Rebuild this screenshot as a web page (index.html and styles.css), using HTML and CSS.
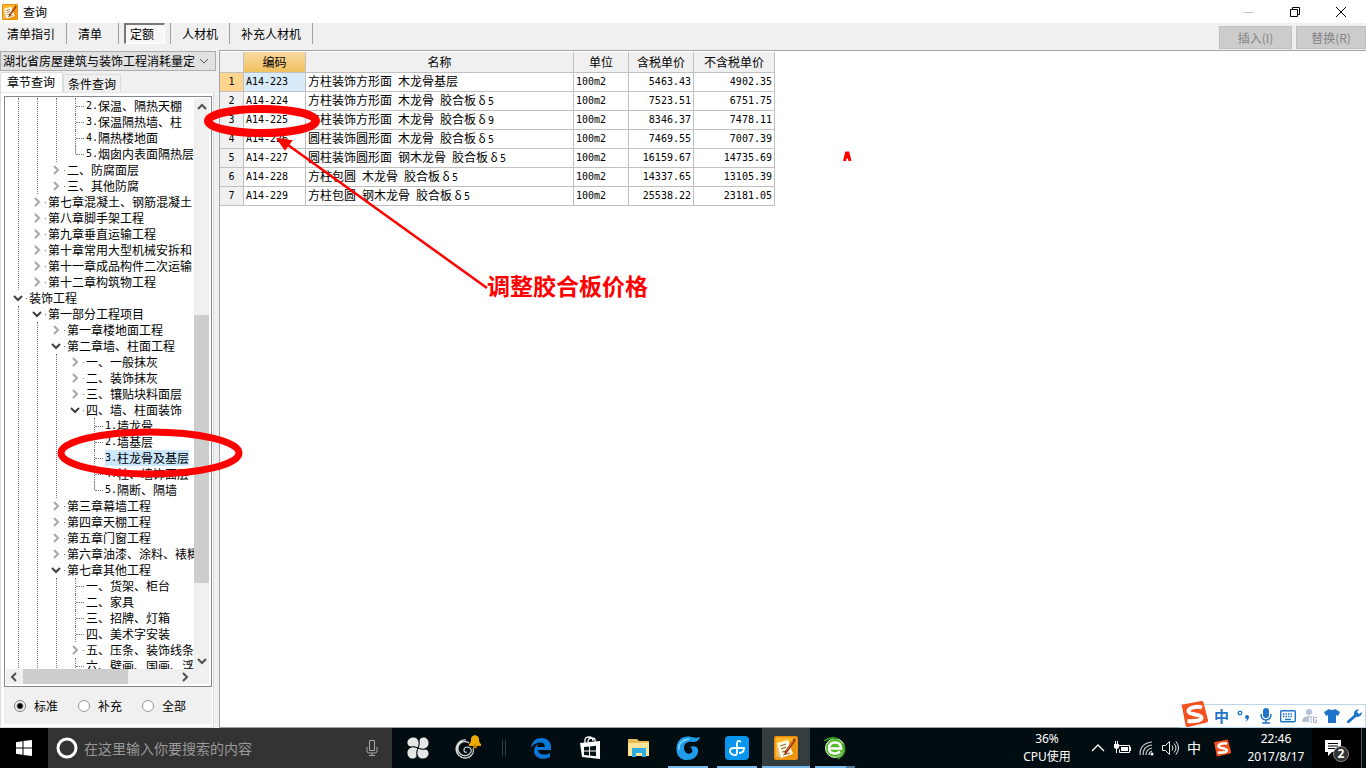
FILE: index.html
```html
<!DOCTYPE html>
<html lang="zh-CN">
<head>
<meta charset="utf-8">
<title>查询</title>
<link rel="stylesheet" href="styles.css">
</head>
<body>
<svg class="defs" width="0" height="0" aria-hidden="true">
  <symbol id="right" viewBox="0 0 14 10"><path d="M3 1l4 4-4 4" fill="none" stroke="#a6a6a6" stroke-width="2"/><path d="M13 5h1v1h-1z" fill="#777"/></symbol>
  <symbol id="down" viewBox="0 0 14 10"><path d="M1 3l4 4 4-4" fill="none" stroke="#404040" stroke-width="2"/><path d="M13 5h1v1h-1z" fill="#777"/></symbol>
  <symbol id="note" viewBox="0 0 24 24">
    <rect width="24" height="24" rx="2" fill="#e98a0c"/><rect x="1.500" y="1.500" width="21" height="21" rx="1" fill="#ffb829"/>
    <path d="M2 22L22 2v20z" fill="#ed920c"/>
    <path d="M3 7l11-3 5 14-12 4z" fill="#fffbe8"/><path d="M3 7l4 15-3-1z" fill="#d9c79a"/>
    <path d="M6 10l6-2M7 13l5-2M8 16l5-1M9 19l7-2" stroke="#8c6b3e" stroke-width="1.200"/>
    <path d="M20 2l2 2-9 13-3 2 1-4z" fill="#9c3213"/><path d="M20 4l-8 11" stroke="#e58a43" stroke-width="1"/>
  </symbol>
  <symbol id="sogou" viewBox="0 0 28 28">
    <path d="M2 6.500Q1 5 3 4.500L21 1q2-.5 2.500 1.500L28 20q.4 2-1.500 2.600L8 27q-2 .3-2.400-1.500z" fill="#f4511e"/>
    <path d="M22 7.500C17 5.500 8 8 8.500 11.500S21 14 21.500 17.500 13 21.500 7.500 21" fill="none" stroke="#fff" stroke-width="4"/>
  </symbol>
</svg>

<header class="titlebar">
  <svg class="app-icon" viewBox="0 0 24 24"><use href="#note"/></svg>
  <h1>查询</h1>
  <div class="window-buttons">
    <button aria-label="最小化"><svg viewBox="0 0 12 12"><path d="M1 6.500h10" stroke="#c4c4c4"/></svg></button>
    <button aria-label="还原"><svg viewBox="0 0 12 12"><path d="M1.500 3.500h7v7h-7zM3.500 3.500v-2h7v7h-2" fill="none" stroke="#000"/></svg></button>
    <button aria-label="关闭"><svg viewBox="0 0 12 12"><path d="M1 1l10 10M11 1L1 11" stroke="#000"/></svg></button>
  </div>
</header>

<nav class="toolbar">
  <div class="modes">
    <button>清单指引</button>
    <button class="roomy">清单</button>
    <button class="pressed"><span>定额</span></button>
    <button>人材机</button>
    <button>补充人材机</button>
  </div>
  <div class="actions">
    <button disabled>插入(I)</button>
    <button disabled>替换(R)</button>
  </div>
</nav>

<main>
  <aside>
    <div class="combo">
      <select aria-label="定额库"><option>湖北省房屋建筑与装饰工程消耗量定</option></select>
      <svg viewBox="0 0 10 10"><path d="M1 3l4 4 4-4" fill="none" stroke="#555"/></svg>
    </div>
    <div class="tabs">
      <button class="active">章节查询</button>
      <button>条件查询</button>
    </div>
    <section class="page">
      <div class="tree-box">
        <div class="tree">
          <ul>
            <li><ul class="kids">
              <li><ul class="kids">
                <li><ul class="kids">
                  <li class="leaf"><b>2.</b>保温、隔热天棚</li>
                  <li class="leaf"><b>3.</b>保温隔热墙、柱</li>
                  <li class="leaf"><b>4.</b>隔热楼地面</li>
                  <li class="leaf end"><b>5.</b>烟囱内表面隔热层</li>
                </ul></li>
                <li><p><svg><use href="#right"/></svg>二、防腐面层</p></li>
                <li><p><svg><use href="#right"/></svg>三、其他防腐</p></li>
              </ul></li>
              <li><p><svg><use href="#right"/></svg>第七章混凝土、钢筋混凝土</p></li>
              <li><p><svg><use href="#right"/></svg>第八章脚手架工程</p></li>
              <li><p><svg><use href="#right"/></svg>第九章垂直运输工程</p></li>
              <li><p><svg><use href="#right"/></svg>第十章常用大型机械安拆和</p></li>
              <li><p><svg><use href="#right"/></svg>第十一章成品构件二次运输</p></li>
              <li><p><svg><use href="#right"/></svg>第十二章构筑物工程</p></li>
            </ul></li>
            <li><p><svg><use href="#down"/></svg>装饰工程</p>
              <ul class="kids">
                <li><p><svg><use href="#down"/></svg>第一部分工程项目</p>
                  <ul class="kids">
                    <li><p><svg><use href="#right"/></svg>第一章楼地面工程</p></li>
                    <li><p><svg><use href="#down"/></svg>第二章墙、柱面工程</p>
                      <ul class="kids">
                        <li><p><svg><use href="#right"/></svg>一、一般抹灰</p></li>
                        <li><p><svg><use href="#right"/></svg>二、装饰抹灰</p></li>
                        <li><p><svg><use href="#right"/></svg>三、镶贴块料面层</p></li>
                        <li><p><svg><use href="#down"/></svg>四、墙、柱面装饰</p>
                          <ul class="kids last">
                            <li class="leaf"><b>1.</b>墙龙骨</li>
                            <li class="leaf"><b>2.</b>墙基层</li>
                            <li class="leaf"><span class="selected"><b>3.</b>柱龙骨及基层</span></li>
                            <li class="leaf"><b>4.</b>柱、墙饰面层</li>
                            <li class="leaf end"><b>5.</b>隔断、隔墙</li>
                          </ul>
                        </li>
                      </ul>
                    </li>
                    <li><p><svg><use href="#right"/></svg>第三章幕墙工程</p></li>
                    <li><p><svg><use href="#right"/></svg>第四章天棚工程</p></li>
                    <li><p><svg><use href="#right"/></svg>第五章门窗工程</p></li>
                    <li><p><svg><use href="#right"/></svg>第六章油漆、涂料、裱糊</p></li>
                    <li><p><svg><use href="#down"/></svg>第七章其他工程</p>
                      <ul class="kids">
                        <li class="leaf">一、货架、柜台</li>
                        <li class="leaf">二、家具</li>
                        <li class="leaf">三、招牌、灯箱</li>
                        <li class="leaf">四、美术字安装</li>
                        <li><p><svg><use href="#right"/></svg>五、压条、装饰线条</p></li>
                        <li class="leaf">六、壁画、国画、浮雕</li>
                      </ul>
                    </li>
                  </ul>
                </li>
              </ul>
            </li>
          </ul>
        </div>
        <div class="vscroll">
          <svg viewBox="0 0 10 10"><path d="M1 7l4-4 4 4" fill="none" stroke="#505050" stroke-width="2"/></svg>
          <i></i>
          <svg viewBox="0 0 10 10"><path d="M1 3l4 4 4-4" fill="none" stroke="#505050" stroke-width="2"/></svg>
        </div>
        <div class="hscroll">
          <svg viewBox="0 0 10 10"><path d="M7 1L3 5l4 4" fill="none" stroke="#505050" stroke-width="2"/></svg>
          <i></i>
          <svg viewBox="0 0 10 10"><path d="M3 1l4 4-4 4" fill="none" stroke="#505050" stroke-width="2"/></svg>
        </div>
      </div>
      <div class="scope">
        <label><input type="radio" name="scope" checked>标准</label>
        <label><input type="radio" name="scope">补充</label>
        <label><input type="radio" name="scope">全部</label>
      </div>
    </section>
  </aside>

  <section class="content">
    <table>
      <colgroup><col class="c-row"><col class="c-code"><col class="c-name"><col class="c-unit"><col class="c-tax"><col class="c-net"></colgroup>
      <thead><tr><th></th><th class="current">编码</th><th>名称</th><th>单位</th><th>含税单价</th><th>不含税单价</th></tr></thead>
      <tbody>
        <tr class="current"><th>1</th><td class="code">A14-223</td><td>方柱装饰方形面<b> </b>木龙骨基层</td><td class="code">100m2</td><td class="num">5463.43</td><td class="num">4902.35</td></tr>
        <tr><th>2</th><td class="code">A14-224</td><td>方柱装饰方形面<b> </b>木龙骨<b> </b>胶合板<em>δ</em><b>5</b></td><td class="code">100m2</td><td class="num">7523.51</td><td class="num">6751.75</td></tr>
        <tr><th>3</th><td class="code">A14-225</td><td>方柱装饰方形面<b> </b>木龙骨<b> </b>胶合板<em>δ</em><b>9</b></td><td class="code">100m2</td><td class="num">8346.37</td><td class="num">7478.11</td></tr>
        <tr><th>4</th><td class="code">A14-226</td><td>圆柱装饰圆形面<b> </b>木龙骨<b> </b>胶合板<em>δ</em><b>5</b></td><td class="code">100m2</td><td class="num">7469.55</td><td class="num">7007.39</td></tr>
        <tr><th>5</th><td class="code">A14-227</td><td>圆柱装饰圆形面<b> </b>钢木龙骨<b> </b>胶合板<em>δ</em><b>5</b></td><td class="code">100m2</td><td class="num">16159.67</td><td class="num">14735.69</td></tr>
        <tr><th>6</th><td class="code">A14-228</td><td>方柱包圆<b> </b>木龙骨<b> </b>胶合板<em>δ</em><b>5</b></td><td class="code">100m2</td><td class="num">14337.65</td><td class="num">13105.39</td></tr>
        <tr><th>7</th><td class="code">A14-229</td><td>方柱包圆<b> </b>钢木龙骨<b> </b>胶合板<em>δ</em><b>5</b></td><td class="code">100m2</td><td class="num">25538.22</td><td class="num">23181.05</td></tr>
      </tbody>
    </table>
  </section>
</main>

<footer class="taskbar">
  <button class="start" aria-label="开始"><svg viewBox="0 0 16 16"><path d="M0 2.200L6.500 1.300V7.500H0zM7.500 1.100L16 0v7.500H7.500zM0 8.500h6.500v6.200L0 13.800zM7.500 8.500H16V16l-8.500-1.100z" fill="#fff"/></svg></button>
  <div class="search">
    <svg class="cortana" viewBox="0 0 22 22"><circle cx="11" cy="11" r="9" fill="none" stroke="#fff" stroke-width="3"/></svg>
    <input type="text" aria-label="搜索" placeholder="在这里输入你要搜索的内容">
    <svg class="mic" viewBox="0 0 12 18"><path d="M3.500 1.500h5v10h-5zM1 8v4q0 2 2 2h6q2 0 2-2V8M6 14v3M3 16.500h6" fill="none" stroke="#a8a8a8"/></svg>
  </div>
  <div class="apps">
    <button aria-label="应用"><svg viewBox="0 0 24 24"><g fill="#e6e6e6"><path id="petal" d="M12 12C12 10 9 12 5 11 2 10 1 8 1.500 5.500 2 3 5 1 8 1.500c4 .5 6 5 4 10.500z"/><use href="#petal" transform="rotate(90 12 12)"/><use href="#petal" transform="rotate(180 12 12)"/><use href="#petal" transform="rotate(270 12 12)"/></g><g fill="none" stroke="#071216"><path id="seam" d="M12 12Q15 6 11.500 1.500"/><use href="#seam" transform="rotate(90 12 12)"/><use href="#seam" transform="rotate(180 12 12)"/><use href="#seam" transform="rotate(270 12 12)"/></g></svg></button>
    <button aria-label="提醒"><svg class="wide" viewBox="0 0 28 28"><path d="M16 9a7 7 0 1 0 2 9q1-4-3-5-4 0-4 3 0 3 3 2M13 6a9 9 0 1 0 7 13q1-3 0-5M10 7a9 9 0 0 0-2 16q6 3 11-2" fill="none" stroke="#d8d8d8" stroke-width="1.200"/><path d="M16 10q2-1 2-5 0-3 4-4 4 1 4 4 0 4 2 5v2H16z" fill="#edab00"/><circle cx="22" cy="12.500" r="2" fill="#c98800"/></svg></button>
    <i class="divider"></i>
    <button aria-label="Edge"><svg viewBox="0 0 24 24"><path d="M2 11.500C3 5 7 2 12.500 2c6 0 9.500 4 9.500 9v3H9c0 5 8 6 12 3v4c-7 4-16 1-16-6 0-3 2-6 5-7-1 1-2 2-2 3h8c0-6-9-6-14 .5z" fill="#0a78d7"/></svg></button>
    <button aria-label="应用商店"><svg viewBox="0 0 24 24"><path d="M2 7l20-2v18L4 21z" fill="#fff"/><path d="M7 7V4q0-3 4-3t4 4M10 6q0-4 4-4t3 4" fill="none" stroke="#fff" stroke-width="1.300"/><path d="M6 11l5-.5v4H6zM12 10.400l6-.6v4.700h-6zM6 15.500h5v4l-5-.5zM12 15.500h6v4.700l-6-.6z" fill="#071216"/></svg></button>
    <button aria-label="文件夹"><svg viewBox="0 0 24 24"><path d="M1 3h9l2 2h10v15H1z" fill="#e8bd56"/><path d="M1 7h21v13H1z" fill="#ffe49b"/><path d="M5 12h14v9h-4v-4H9v4H5z" fill="#2eace3"/></svg></button>
    <button class="running" aria-label="广联达"><svg viewBox="0 0 24 24"><path d="M24 1c-1 4-4 5-7 5-6-1-9 2-9 6s4 7 7 5c2-1 2-4-1-6 6-2 9 1 8 5-1 5-5 8-11 8C4 24 0 19 .5 12 1 4 7-1 15 1c4 1 6 1 9 0z" fill="#1f9dec"/><path d="M13 3C6 4 2 8 3 14" fill="none" stroke="#7dd5ff" stroke-width="1.500"/></svg></button>
    <button class="running" aria-label="云助手"><svg viewBox="0 0 24 24"><rect width="24" height="24" rx="4" fill="#0795ee"/><path d="M16 6q-4-3-4 2v8q0 4-3 3-4-1-4-4 0-3 4-3h10q0 5-5 5" fill="none" stroke="#fff" stroke-width="1.800"/></svg></button>
    <button class="running current" aria-label="计价软件"><svg viewBox="0 0 24 24"><use href="#note"/></svg></button>
    <button class="running grouped" aria-label="浏览器"><svg viewBox="0 0 24 24"><circle cx="12" cy="12" r="9.500" fill="#53b928" stroke="#d9efd0"/><path d="M6 12.500h12q0-6-6-6t-6 6q0 5 6 5 3 0 5-2" fill="none" stroke="#fff" stroke-width="2.500"/><path d="M1 5Q8 0 15 3M20 8q5 9-5 15" fill="none" stroke="#2e9b20" stroke-width="1.500"/></svg></button>
  </div>
  <div class="cpu"><span>36%</span><span>CPU使用</span></div>
  <div class="tray">
    <button aria-label="展开"><svg viewBox="0 0 18 18"><path d="M3 12l6-6 6 6" fill="none" stroke="#fff" stroke-width="1.300"/></svg></button>
    <button aria-label="电池"><svg viewBox="0 0 18 18"><path d="M5.500 6.500h11v7h-10v-3" fill="none" stroke="#fff"/><path d="M8 8h7v4H8zM1 5h5v3q0 2-2.500 2T1 8zM2 2h1v3H2zM4 2h1v3H4zM3 10h1v4H3zM17 8h1v4h-1z" fill="#fff"/></svg></button>
    <button aria-label="无线网络"><svg viewBox="0 0 18 18"><path d="M3 16Q3 4 15 3M6 16q0-9 9-10M9 16q0-6 6-7M12 16q0-3 3-4" fill="none" stroke="#ccc" stroke-width="1.200"/><circle cx="15" cy="15" r="1.500" fill="#fff"/></svg></button>
    <button aria-label="音量"><svg viewBox="0 0 18 18"><path d="M1.500 6.500h3l4-4v13l-4-4h-3zM11 6.500q2 2.500 0 5M13 4.500q4 4.500 0 9M15 2.500q5 6.500 0 13" fill="none" stroke="#eee"/></svg></button>
    <button class="ime">中</button>
    <button class="sg" aria-label="搜狗"><svg viewBox="0 0 28 28"><use href="#sogou"/></svg></button>
  </div>
  <div class="clock"><span>22:46</span><span>2017/8/17</span></div>
  <button class="notices" aria-label="通知"><svg viewBox="0 0 18 18"><path d="M1 1h16v12H8l-4 4v-4H1z" fill="#fff"/><path d="M4 4.500h10M4 7h10M4 9.500h7" stroke="#000"/></svg><span>2</span></button>
</footer>

<div class="ime-bar">
  <svg class="logo" viewBox="0 0 28 28"><use href="#sogou"/></svg>
  <span>中</span>
  <svg viewBox="0 0 16 16"><circle cx="4" cy="5" r="1.800" fill="none" stroke="#1d74c9" stroke-width="1.300"/><path d="M9 9q0-2 2-2t2 2q0 3-4 5 2-2 2-3-2 0-2-2z" fill="#1d74c9"/></svg>
  <svg viewBox="0 0 16 16"><rect x="5" width="6" height="10" rx="3" fill="#1d74c9"/><path d="M3 6q0 6 5 6t5-6M8 12v3M4 15h8" fill="none" stroke="#1d74c9" stroke-width="1.500"/></svg>
  <svg viewBox="0 0 16 16"><rect x=".7" y="2.700" width="14.600" height="11" rx="1" fill="none" stroke="#1d74c9" stroke-width="1.400"/><path d="M3 6h10M3 8.500h10" stroke="#1d74c9" stroke-width="1.500" stroke-dasharray="1.500 1"/><path d="M5 11.500h6" stroke="#1d74c9" stroke-width="1.500"/></svg>
  <svg viewBox="0 0 16 16"><circle cx="7" cy="4" r="3" fill="#b5c0d4"/><path d="M0 14q0-6 7-6 3 0 5 1v5z" fill="#b5c0d4"/><path d="M7 9h9v6H7z" fill="#fff"/><path d="M9 9v6M15 9.500h-3.500v5h3v-2.500h-3" fill="none" stroke="#a5b0c8" stroke-width="1"/></svg>
  <svg viewBox="0 0 16 16"><path d="M5 1q3 2 6 0l5 3-2 4-2-1v8H4V7L2 8 0 4z" fill="#1d74c9"/></svg>
  <svg viewBox="0 0 16 16"><path d="M1 13l7-6q-1-5 5-6l-2 3 2 2 3-2q0 5-6 5l-7 6q-3 0-2-2z" fill="#1d74c9"/></svg>
</div>

<div class="markup">
  <svg viewBox="0 0 870 500" width="870" height="500" fill="none" stroke="#fe0000">
    <ellipse cx="262" cy="121" rx="54" ry="12" stroke-width="8"/>
    <ellipse cx="150" cy="453" rx="89" ry="21" stroke-width="7"/>
    <path d="M487 288L288 145" stroke-width="2.500"/>
    <path d="M278 139l13 2-6 8z" fill="#fe0000" stroke-width="2"/>
    <path d="M844.500 161l2-8h1.500l2 8M845 157h5" stroke-width="3"/>
  </svg>
  <p>调整胶合板价格</p>
</div>
</body>
</html>
```
FILE: styles.css
```css
* { box-sizing: border-box; }
body {
  margin: 0;
  height: 100vh;
  display: flex;
  flex-direction: column;
  position: relative;
  overflow: hidden;
  background: #f0f0f0;
  color: #000;
  font: 12px/16px "Noto Sans CJK SC", sans-serif;
}
button, input, select { font: inherit; color: inherit; }
button { border: 0; padding: 0; margin: 0; background: none; }
ul { list-style: none; margin: 0; padding: 0; }
p, h1 { margin: 0; font-weight: normal; font-size: 12px; }
svg { display: block; flex: none; }
b { font: 10px/16px "DejaVu Sans Mono", monospace; white-space: pre; }
.defs { position: absolute; }

.titlebar { display: flex; align-items: center; gap: 5px; height: 23px; flex: none; padding-left: 2px; background: #fff; }
.app-icon { width: 16px; height: 16px; }
.window-buttons { display: flex; margin-left: auto; }
.window-buttons button { width: 46px; height: 22px; display: grid; place-items: center; }
.window-buttons svg { width: 12px; height: 12px; }
.window-buttons button:last-child { margin-right: 2px; }

.toolbar { display: flex; justify-content: space-between; height: 27px; flex: none; }
.modes { display: flex; }
.modes button { height: 21px; padding: 0 11px; border-right: 1px solid #a0a0a0; }
.modes button:first-child { padding-left: 7px; }
.modes .roomy { padding-right: 16px; }
.modes .pressed { padding: 0 5px; }
.pressed span {
  display: block;
  padding: 1px 10px 1px 4px;
  border: 1px solid #fff;
  border-top: 2px solid #787878;
  border-left: 2px solid #787878;
  background: #f7f7f7;
}
.actions { display: flex; gap: 4px; padding-top: 3px; }
.actions button { width: 73px; height: 23px; border: 1px solid #bfbfbf; background: #ccc; color: #838383; }
.actions button:last-child { width: 70px; }

main { display: flex; flex: 1; min-height: 0; }
aside { display: flex; flex-direction: column; width: 219px; flex: none; padding-top: 1px; }
.combo { display: grid; grid-template-columns: 1fr 16px; align-items: center; width: 216px; height: 20px; flex: none; border: 1px solid #adadad; background: #e1e1e1; }
.combo select { grid-area: 1 / 1 / 2 / 3; width: 100%; height: 18px; padding: 0 0 0 2px; border: 0; background: none; appearance: none; }
.combo svg { grid-area: 1 / 2; width: 10px; height: 10px; pointer-events: none; }
.tabs { display: flex; align-items: flex-end; flex: none; padding-top: 1px; }
.tabs button { height: 18px; padding: 0 4px; border: 1px solid #dcdcdc; border-bottom: 0; }
.tabs .active { height: 20px; padding: 0 7px 2px 6px; background: #fff; }
.page { display: flex; flex-direction: column; flex: 1; min-height: 0; width: 214px; padding: 3px 1px 3px 3px; border: 1px solid #dcdcdc; border-top-color: #e8e8e8; background: #fff; }
.tree-box { display: grid; grid-template: minmax(0, 1fr) 15px / minmax(0, 1fr) 15px; flex: 1; min-height: 0; width: 208px; padding: 1px 2px 2px 1px; border: 1px solid #828790; background: #fff; }
.tree { overflow: hidden; white-space: nowrap; }
.tree p { display: flex; align-items: center; gap: 2px; height: 16px; padding-left: 7px; }
.tree p svg { width: 14px; height: 10px; }
.kids { margin-left: 12px; padding-left: 6px; border-left: 1px dotted #777; }
.kids.last { border-left-color: transparent; }
.leaf { display: flex; align-items: center; height: 16px; margin-left: 12px; border-left: 1px dotted #777; }
.leaf::before { content: ""; flex: none; width: 8px; margin-right: 2px; border-top: 1px dotted #777; }
.leaf.end { border-image: linear-gradient(#999 50%, transparent 50%) 1; }
.selected { display: flex; align-items: center; height: 16px; background: #cce8ff; }
.vscroll { display: flex; flex-direction: column; align-items: center; padding: 4px 0 3px; background: #f0f0f0; }
.vscroll svg, .hscroll svg { width: 10px; height: 10px; }
.vscroll i { width: 15px; height: 268px; margin: auto 0 73px; background: #cdcdcd; }
.hscroll { grid-column: 1 / 3; display: flex; align-items: center; padding: 0 19px 0 3px; background: #f0f0f0; }
.hscroll i { width: 105px; height: 15px; margin: 0 auto 0 4px; background: #cdcdcd; }
.scope { display: flex; align-items: center; height: 37px; flex: none; gap: 16px; padding-left: 10px; background: #f0f0f0; width: 208px; }
.scope label { display: flex; align-items: center; gap: 8px; width: 48px; }
.scope input { appearance: none; flex: none; width: 12px; height: 12px; margin: 0; border: 1px solid #999; border-radius: 50%; background: #fff; }
.scope input:checked { border-color: #777; background: radial-gradient(#000 2px, #fff 4px); }

.content { flex: 1; min-width: 0; padding-top: 1px; border: 1px solid #a0a3aa; border-right: 0; background: #fff; }
table { table-layout: fixed; border-collapse: separate; border-spacing: 0; width: 555px; }
.c-row { width: 24px; } .c-code { width: 62px; } .c-name { width: 268px; }
.c-unit { width: 55px; } .c-tax { width: 65px; } .c-net { width: 81px; }
th, td { height: 19px; padding: 0 2px; border: 0 solid #c0c0c0; border-width: 0 1px 1px 0; font-weight: normal; text-align: left; white-space: pre; line-height: 16px; }
th { background: #f0f0f0; text-align: center; }
thead th { height: 21px; }
thead .current { background: linear-gradient(#f9d99f, #f1c160); }
tbody th, .code, .num { font: 10px/16px "DejaVu Sans Mono", monospace; }
.num { text-align: right; }
tr.current th { background: #ffd58d; }
thead tr th.current { background: linear-gradient(#f9d99f, #f1c160); }
tr.current td:nth-child(2) { background: #d9ebf9; }
td em { display: inline-block; width: 12px; text-align: center; font-style: normal; }

.taskbar { display: flex; height: 40px; flex: none; background: #020d11; color: #fff; font-family: "Noto Sans", "Noto Sans CJK SC", sans-serif; }
.start { width: 48px; display: grid; place-items: center; background: #000; }
.start svg { width: 16px; height: 16px; }
.search { display: flex; align-items: center; width: 344px; padding: 0 14px 0 8px; background: #333; }
.cortana { width: 22px; height: 22px; }
.search input { flex: 1; min-width: 0; margin-left: 6px; padding: 0; border: 0; background: none; font: 14px/20px "Noto Sans CJK SC", sans-serif; }
.search input::placeholder { color: #999; }
.mic { width: 12px; height: 18px; }
.apps { display: flex; align-items: stretch; gap: 1px; padding-left: 2px; }
.apps button { width: 48px; display: grid; place-items: center; }
.apps svg { width: 24px; height: 24px; }
.apps .wide { width: 28px; height: 28px; }
.divider { width: 4px; height: 16px; margin: 12px 10px; border: solid #333a3d; border-width: 0 1px; }
.apps .running { background: linear-gradient(#76b9ed, #76b9ed) center bottom / 40px 2px no-repeat; }
.apps .current { background: linear-gradient(#76b9ed, #76b9ed) center bottom / 48px 2px no-repeat #343d40; }
.apps .grouped { background: linear-gradient(90deg, #76b9ed 31px, #4b7a9d 31px) center bottom / 40px 2px no-repeat; }
.cpu, .clock { display: flex; flex-direction: column; justify-content: center; align-items: center; line-height: 18px; }
.cpu { width: 56px; margin-left: auto; }
.tray { display: flex; align-items: center; padding-left: 11px; }
.tray button { width: 24px; display: grid; place-items: center; }
.tray svg { width: 18px; height: 18px; }
.tray .ime { font-size: 14px; }
.tray .sg { width: 32px; }
.clock { width: 72px; margin-left: 2px; }
.notices { display: flex; align-items: center; width: 50px; padding-left: 12px; border-right: 1px solid #555; margin-right: 4px; background: #000; }
.notices svg { width: 18px; height: 18px; }
.notices span { flex: none; width: 16px; height: 16px; margin: 12px 0 0 -9px; border: 1px solid #888; border-radius: 50%; background: #333; font-weight: bold; line-height: 14px; text-align: center; }

.ime-bar { position: absolute; right: 0; bottom: 40px; display: flex; align-items: center; gap: 6px; height: 24px; padding: 0 3px 0 0; border: 1px solid #bcd6ea; border-left: 0; background: #fff; color: #1d74c9; }
.ime-bar svg { width: 16px; height: 16px; }
.ime-bar .logo { width: 28px; height: 28px; margin: -4px 0 0; }
.ime-bar span { width: 16px; font-size: 15px; font-weight: bold; }

.markup { position: absolute; left: 0; top: 0; pointer-events: none; }
.markup p { position: absolute; left: 487px; top: 271px; color: #fe0000; font-size: 23px; line-height: 28px; font-weight: bold; white-space: nowrap; }
```
